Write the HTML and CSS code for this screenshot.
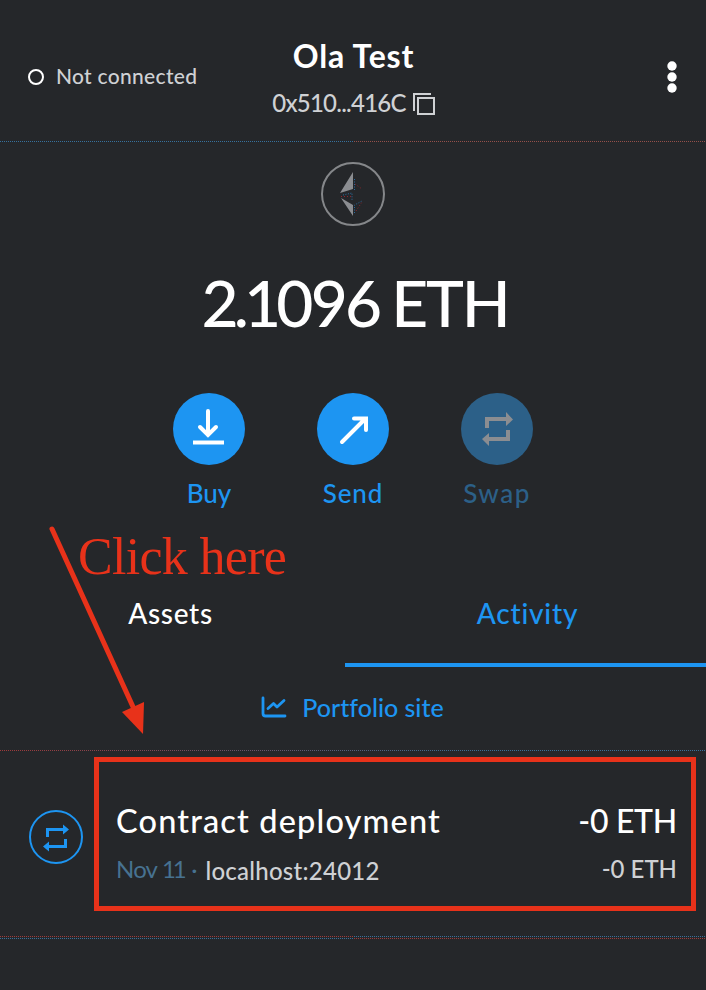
FILE: index.html
```html
<!DOCTYPE html>
<html lang="en">
<head>
<meta charset="utf-8">
<title>Wallet</title>
<link rel="stylesheet" href="styles.css">
</head>
<body>
<main class="wallet">
  <header class="header">
    <div class="status"><i class="status-dot"></i><span class="t-status">Not connected</span></div>
    <div class="account">
      <h1 class="account-name"><span class="t-name">Ola Test</span></h1>
      <div class="address"><span class="t-address">0x510...416C</span>
        <svg class="copy" width="22" height="22" viewBox="0 0 22 22" fill="none" stroke="#cfd1d4" stroke-width="2"><path d="M1 18V1H18"/><rect x="5" y="5" width="16" height="16"/></svg>
      </div>
    </div>
    <svg class="more" width="10" height="32" viewBox="0 0 10 32" fill="#fff"><circle cx="5" cy="5" r="4.7"/><circle cx="5" cy="16" r="4.7"/><circle cx="5" cy="27" r="4.7"/></svg>
  </header>
  <div class="rule rule-split"></div>

  <section class="balance">
    <svg class="coin" width="64" height="64" viewBox="0 0 64 64"><circle cx="32" cy="32" r="31" fill="none" stroke="#85878a" stroke-width="2"/><path d="M32 10V27L19 31Z M32 54V43L20 36Z" fill="#8b8d91"/><path d="M33.500 17V28M22 33L31 31V39M33.500 51V43L41 39" fill="none" stroke="#2c6ca0" stroke-width="1" stroke-dasharray="1 1.500"/><path d="M34 22L41 27M20 34.500H31M35 49L41 40" fill="none" stroke="#90252c" stroke-width="1" stroke-dasharray="1 2"/></svg>
    <div class="amount"><span class="t-amount"><span class="tight">2.1</span>096</span><span class="t-unit">ETH</span></div>
  </section>

  <nav class="actions">
    <div class="action">
      <svg width="72" height="72" viewBox="0 0 72 72" fill="none" stroke="#fff" stroke-width="4"><circle cx="36" cy="36" r="36" fill="#1d95f2" stroke="none"/><path d="M35 18V42M27 34L35 42L43 34" stroke-linecap="round"/><path d="M20 49.500H51"/></svg>
      <span class="t-buy">Buy</span>
    </div>
    <div class="action">
      <svg width="72" height="72" viewBox="0 0 72 72" fill="none" stroke="#fff" stroke-width="4"><circle cx="36" cy="36" r="36" fill="#1d95f2" stroke="none"/><path d="M25 49L48.500 25.500M37 25.500H49V37" stroke-linecap="round"/></svg>
      <span class="t-send">Send</span>
    </div>
    <div class="action action-off">
      <svg width="72" height="72" viewBox="0 0 72 72"><circle cx="36" cy="36" r="36" fill="#2c6088"/><path fill="#8b8d91" d="M24 24H45V19L52 26.500L45 33V28H28V35H24ZM49 48H28V53L21 46L28 40V44H45V37H49Z"/></svg>
      <span class="t-swap">Swap</span>
    </div>
  </nav>

  <div class="tabs">
    <div class="tab"><span class="t-assets">Assets</span></div>
    <div class="tab tab-active"><span class="t-activity">Activity</span></div>
  </div>

  <div class="portfolio">
    <svg width="26" height="22" viewBox="0 0 26 22" fill="none" stroke="#1d95f2" stroke-width="2.800" stroke-linecap="round" stroke-linejoin="round"><path d="M2 2V17.500Q2 20 4.500 20H24M7 12.500L12.500 7.500L16 11L23 4.500"/></svg>
    <span class="t-portfolio">Portfolio site</span>
  </div>
  <div class="rule rule-mixed"></div>

  <section class="transaction">
    <svg class="tx-icon" width="54" height="54" viewBox="0 0 54 54"><circle cx="27" cy="27" r="26" fill="none" stroke="#1d95f2" stroke-width="2"/><path fill="#1d95f2" d="M17 18H34V14.500L40 19.500L34 24.500V21H20V27H17ZM38 38H20V41.500L14 36.500L20 31.500V35H35V29H38Z"/></svg>
    <div class="tx-box">
      <div class="tx-line tx-main"><span class="t-contract">Contract deployment</span><span class="t-eth">-0 ETH</span></div>
      <div class="tx-line tx-sub"><span class="tx-meta"><span class="t-date">Nov <span class="day">11</span></span><span class="dot">·</span><span class="t-host">localhost:24012</span></span><span class="t-eth2">-0 ETH</span></div>
    </div>
  </section>
  <div class="rule rule-warm"></div>
  <div class="rule rule-cool"></div>

  <div class="note">Click here</div>
  <svg class="pointer" width="98" height="214" viewBox="0 0 98 214"><path d="M4 5L86 185" stroke="#e8321a" stroke-width="5" stroke-linecap="round"/><path d="M74 188L96 178L95 210Z" fill="#e8321a"/></svg>
</main>
</body>
</html>
```
FILE: styles.css
```css
* { box-sizing: border-box; }
body {
  margin: 0;
  background: #25272a;
  color: #fff;
  font-family: Lato, "Liberation Sans", sans-serif;
  font-weight: 500;
  font-variant-ligatures: none;
}
.wallet { position: relative; width: 706px; height: 990px; overflow: hidden; }
.wallet span { white-space: nowrap; }
svg { display: block; flex: none; }

.header {
  display: grid;
  grid-template-columns: 1fr auto 1fr;
  height: 141px;
  padding: 0 29px 0 28px;
}
.status { display: flex; align-items: center; gap: 12px; height: 32px; margin-top: 61px; font-size: 21px; line-height: 24px; color: #cfd1d4; }
.status-dot { width: 16px; height: 16px; border: 2px solid #fff; border-radius: 50%; }
.account { padding: 36px 0 0 2px; }
.account-name { margin: 0; font-size: 32px; line-height: 40px; font-weight: 700; text-align: center; }
.address { display: flex; align-items: center; gap: 7px; height: 32px; margin-top: 11px; font-size: 24px; line-height: 32px; color: #cfd1d4; }
.copy { margin-top: 2px; }
.more { justify-self: end; margin-top: 61px; }

.t-status { margin-top: -2px; letter-spacing: 0.3px; }
.t-name { letter-spacing: 0.8px; }
.t-address { letter-spacing: -0.75px; }
.t-amount { letter-spacing: -2.8px; }
.tight { letter-spacing: -4.8px; }
.t-unit { letter-spacing: -2.2px; }
.t-send { letter-spacing: 0.9px; }
.t-swap { letter-spacing: 1.5px; }
.t-assets { letter-spacing: 0.7px; }
.t-activity { letter-spacing: 0.8px; }
.t-contract { font-size: 32.5px; letter-spacing: 1.15px; }
.t-date { letter-spacing: -0.8px; }
.day { letter-spacing: -3.2px; }
.t-host { letter-spacing: 0.25px; }
.t-eth { letter-spacing: -0.3px; }

.rule { height: 1px; }
.rule-split { background: repeating-linear-gradient(90deg, transparent 0 1px, #25272a 1px 2px), linear-gradient(90deg, #37719c 50%, #94504a 50%); }
.rule-mixed { background: repeating-linear-gradient(90deg, transparent 0 1px, #25272a 1px 2px), linear-gradient(90deg, #a03a3a, #37719c 70%); }
.rule-warm { background: repeating-linear-gradient(90deg, transparent 0 1px, #25272a 1px 2px), linear-gradient(90deg, #a03a3a 50%, #37719c 50%); }
.rule-cool { margin-top: 1px; background: repeating-linear-gradient(90deg, transparent 0 1px, #25272a 1px 2px), linear-gradient(90deg, #37719c 50%, #a03a3a 50%); }

.balance { display: flex; flex-direction: column; align-items: center; height: 251px; padding-top: 20px; }
.amount { display: flex; gap: 12px; margin: 37px 0 0 4px; font-size: 64px; line-height: 80px; }

.actions { display: flex; justify-content: center; gap: 72px; height: 169px; }
.action { display: flex; flex-direction: column; align-items: center; gap: 12px; width: 72px; font-size: 26px; line-height: 32px; color: #1d95f2; }
.action-off { color: #2c6088; }

.tabs { display: flex; height: 105px; }
.tab { flex: 0 0 345px; padding-top: 33px; font-size: 28px; line-height: 36px; text-align: center; }
.tab:first-child { padding-right: 4px; }
.tab-active { flex: 1; padding-left: 4px; color: #1d95f2; border-bottom: 4px solid #1d95f2; }

.portfolio { display: flex; justify-content: center; align-items: center; gap: 15px; height: 83px; padding: 0 1px 3px 0; font-size: 25px; color: #1d95f2; }

.transaction { display: flex; align-items: center; gap: 11px; height: 185px; padding: 0 10px 0 29px; }
.tx-icon { margin-top: -13px; }
.tx-box { flex: 1; height: 154px; margin-top: -19px; padding: 39px 14px 0 17px; border: 5px solid #e8321a; }
.tx-line { display: flex; justify-content: space-between; }
.tx-main { font-size: 32px; line-height: 40px; }
.tx-sub { margin-top: 12px; font-size: 24px; line-height: 32px; color: #cfd1d4; }
.tx-meta { display: flex; }
.t-date, .dot { font-weight: 400; color: #477291; }
.dot { width: 22px; text-align: center; }
.t-host { padding-top: 2px; }

.note { position: absolute; left: 78px; top: 527px; font: 52px/60px "Liberation Serif", serif; letter-spacing: -0.7px; color: #e8321a; white-space: nowrap; }
.pointer { position: absolute; left: 48px; top: 524px; }
```
